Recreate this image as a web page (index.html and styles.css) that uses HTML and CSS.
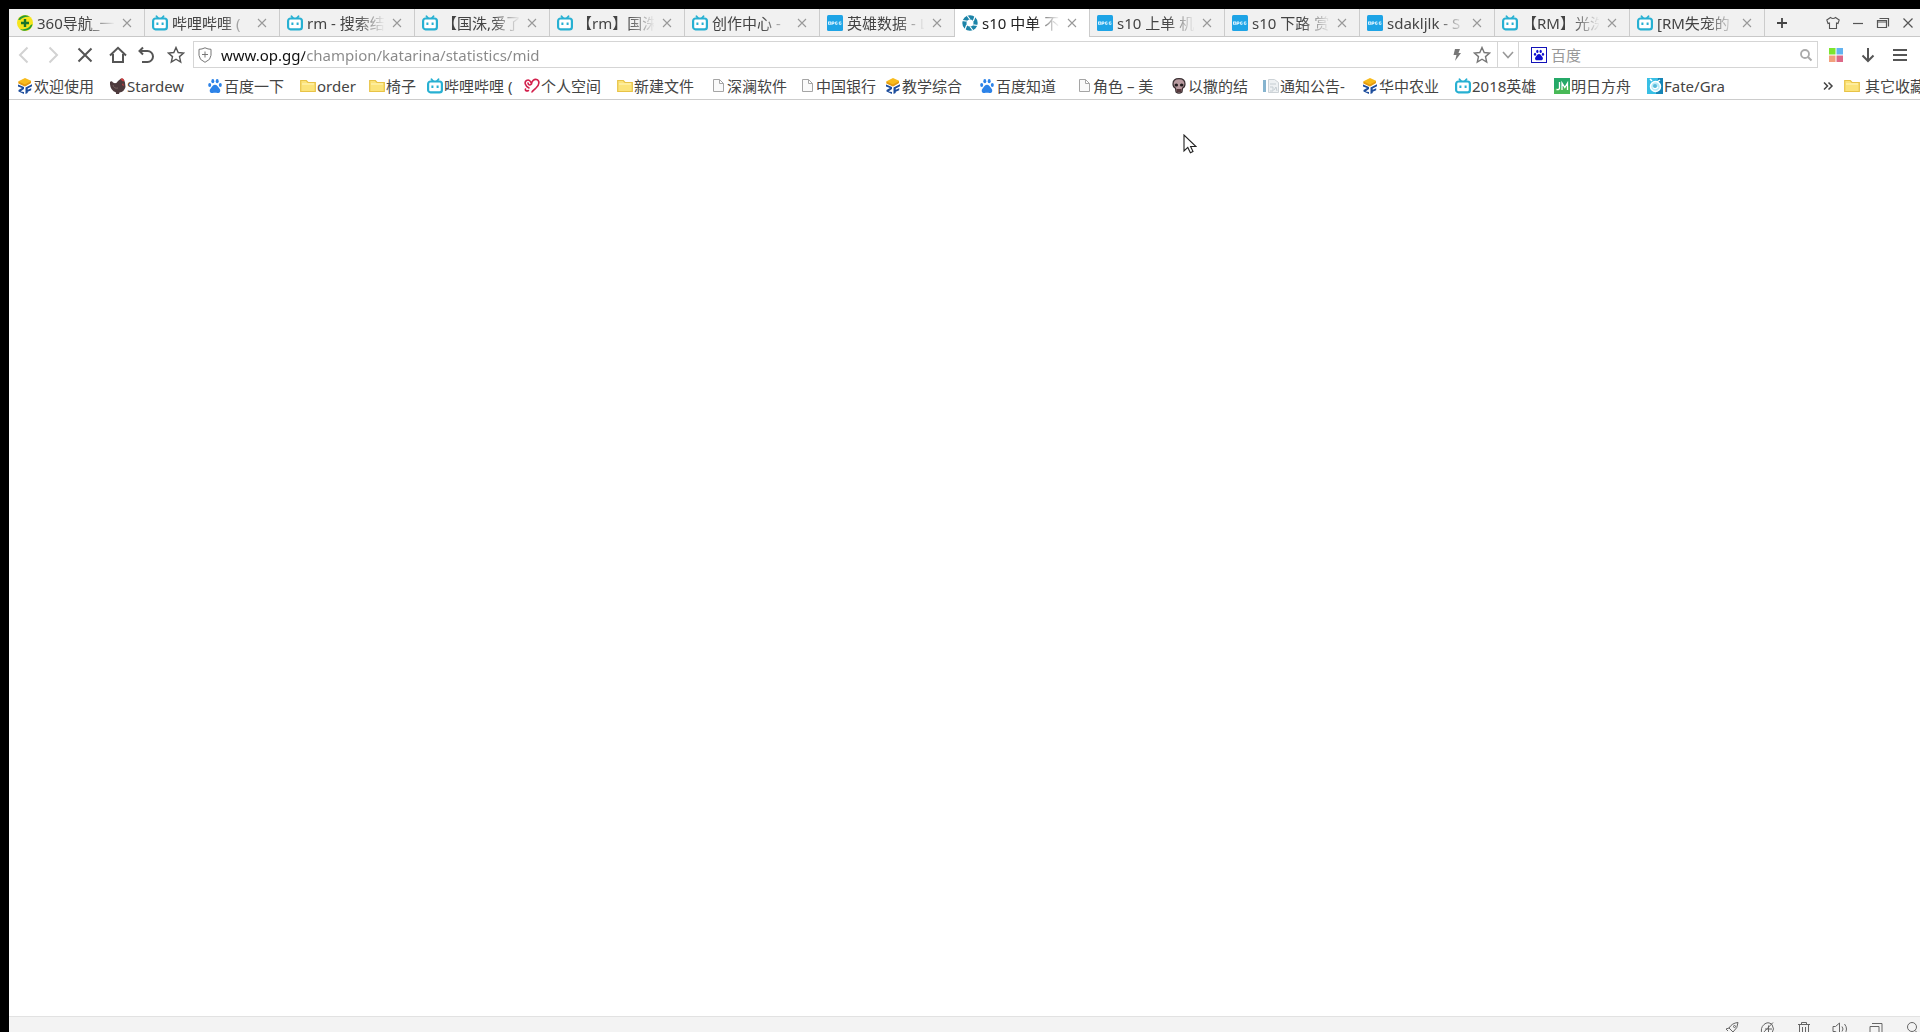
FILE: index.html
```html
<!DOCTYPE html>
<html lang="zh-CN">
<head>
<meta charset="utf-8">
<title>www.op.gg</title>
<link rel="stylesheet" href="styles.css">
</head>
<body>
<svg class="defs" aria-hidden="true">
  <symbol id="bili" viewBox="0 0 16 16"><path d="M4.500 1.200 6.200 3.400M11.500 1.200 9.800 3.400" stroke="#27b0d2" stroke-width="1.800" stroke-linecap="round"/><rect x="1.100" y="3.500" width="13.800" height="10.800" rx="2.400" fill="#fff" stroke="#27b0d2" stroke-width="2.200"/><path d="M5.400 7.500v2.400M10.600 7.500v2.400" stroke="#27b0d2" stroke-width="2"/></symbol>
  <symbol id="opgg" viewBox="0 0 16 16"><rect width="16" height="16" rx="1.500" fill="#1ea4e6"/><g fill="none" stroke="#d9f2ff" stroke-width="1"><rect x="1.500" y="7" width="2.300" height="2.200"/><path d="M5 10V7h2v1.600H5"/><path d="M10.400 7H8.600v2.300h1.600V8.300M14.300 7h-2v2.300h1.800V8.300"/></g></symbol>
  <symbol id="site" viewBox="0 0 16 16"><path d="M1.500 3.300 8 0l6 2.800v2L8 8.300 1.500 5.300z" fill="#f8bb1c"/><path d="m1.500 3.600 6.300 3L14 3.300v1.800L8 8.500 1.500 5.500z" fill="#e39a12"/><path d="M1 6.500 7 9v2l-3.500 2.500L7 14v2l-5.500-2.500V12L5 10 1 8.500zM8.500 9.500 15 6.300v2l-4.300 2.200v1.300l3.500-1.500v1.900l-3.500 1.500V15l-2.200 1z" fill="#1d4d9c"/></symbol>
  <symbol id="paw" viewBox="0 0 16 16"><g fill="currentColor"><ellipse cx="2.700" cy="7" rx="1.500" ry="2"/><ellipse cx="5.800" cy="3.200" rx="1.500" ry="2.100"/><ellipse cx="10.200" cy="3.200" rx="1.500" ry="2.100"/><ellipse cx="13.300" cy="7" rx="1.500" ry="2"/><path d="M8 6.700c2 0 2.600 1.800 4 3.200 2.500 2.500 1 5.400-1.600 5.100-1.600-.2-3.200-.2-4.800 0C3 15.300 1.500 12.400 4 9.900c1.400-1.400 2-3.200 4-3.200z"/></g></symbol>
  <symbol id="folder" viewBox="0 0 16 16"><path d="M.7 13.500V2.500h5.600l1.700 2h7.300v9z" fill="#fbe37a" stroke="#e8c347" stroke-width="1.200"/><path d="M2 6h12" stroke="#fff0a8" stroke-width="1.500"/></symbol>
  <symbol id="page" viewBox="0 0 16 16"><path d="M3.500 1.500h6l4 4v8h-10zM9.500 1.500v4h4" fill="#fafafa" stroke="#a5a5a5"/></symbol>
  <symbol id="cross" viewBox="0 0 10 10"><path d="m1 1 8 8M9 1 1 9" stroke="currentColor" stroke-width="1.100"/></symbol>
  <symbol id="star" viewBox="0 0 18 18"><path d="m9 1.500 2.200 5 5.400.5-4.100 3.600 1.200 5.400L9 13.200 4.300 16l1.200-5.400L1.400 7l5.400-.5z" fill="none" stroke="currentColor" stroke-width="1.400"/></symbol>
</svg>

<div class="browser">
  <nav class="tabs" aria-label="标签页">
    <div class="tab"><svg class="fav" viewBox="0 0 16 16"><circle cx="8" cy="8" r="8" fill="#f5e51c"/><path d="M1 4.500A8 8 0 0 1 13 2C8 1.300 5 3 3 5zM15.500 9A8 8 0 0 1 3 14.300c5 .7 9-1 10.500-4z" fill="#239b37"/><path d="M8 4v8M4 8h8" stroke="#17752a" stroke-width="2.400"/></svg><a class="title" href="#">360导航_一</a><button class="close" aria-label="关闭"><svg><use href="#cross"/></svg></button></div>
    <div class="tab"><svg class="fav"><use href="#bili"/></svg><a class="title" href="#">哔哩哔哩 (</a><button class="close" aria-label="关闭"><svg><use href="#cross"/></svg></button></div>
    <div class="tab"><svg class="fav"><use href="#bili"/></svg><a class="title" href="#">rm - 搜索结</a><button class="close" aria-label="关闭"><svg><use href="#cross"/></svg></button></div>
    <div class="tab"><svg class="fav"><use href="#bili"/></svg><a class="title" href="#">【国洙,爱了</a><button class="close" aria-label="关闭"><svg><use href="#cross"/></svg></button></div>
    <div class="tab"><svg class="fav"><use href="#bili"/></svg><a class="title" href="#">【rm】国洙</a><button class="close" aria-label="关闭"><svg><use href="#cross"/></svg></button></div>
    <div class="tab"><svg class="fav"><use href="#bili"/></svg><a class="title" href="#">创作中心 -</a><button class="close" aria-label="关闭"><svg><use href="#cross"/></svg></button></div>
    <div class="tab"><svg class="fav"><use href="#opgg"/></svg><a class="title" href="#">英雄数据 - L</a><button class="close" aria-label="关闭"><svg><use href="#cross"/></svg></button></div>
    <div class="tab active"><svg class="fav" viewBox="0 0 16 16"><circle cx="8" cy="8" r="5.600" fill="none" stroke="#1c84a8" stroke-width="4.200"/><path d="m8 4.500-3-4M11.200 6.300 13 1.500M11.200 9.800l4.800.7M8 11.500l3 4M4.800 9.700 3 14.500M4.800 6.200 0 5.500" stroke="#fff" stroke-width="1.200"/></svg><a class="title" href="#" aria-current="page">s10 中单 不</a><button class="close" aria-label="关闭"><svg><use href="#cross"/></svg></button></div>
    <div class="tab"><svg class="fav"><use href="#opgg"/></svg><a class="title" href="#">s10 上单 机</a><button class="close" aria-label="关闭"><svg><use href="#cross"/></svg></button></div>
    <div class="tab"><svg class="fav"><use href="#opgg"/></svg><a class="title" href="#">s10 下路 赏</a><button class="close" aria-label="关闭"><svg><use href="#cross"/></svg></button></div>
    <div class="tab"><svg class="fav"><use href="#opgg"/></svg><a class="title" href="#">sdakljlk - S</a><button class="close" aria-label="关闭"><svg><use href="#cross"/></svg></button></div>
    <div class="tab"><svg class="fav"><use href="#bili"/></svg><a class="title" href="#">【RM】光洙</a><button class="close" aria-label="关闭"><svg><use href="#cross"/></svg></button></div>
    <div class="tab"><svg class="fav"><use href="#bili"/></svg><a class="title" href="#">[RM失宠的</a><button class="close" aria-label="关闭"><svg><use href="#cross"/></svg></button></div>
    <button class="newtab" aria-label="新标签页"><svg viewBox="0 0 12 12"><path d="M6 1v10M1 6h10" stroke="#444" stroke-width="1.800"/></svg></button>
    <div class="window">
      <button aria-label="皮肤"><svg viewBox="0 0 14 14"><path d="M4.500 1.500q2.500 2 5 0l3.700 2.500-1.200 3.500-1.500-.5v5.500h-7V7L2 7.500.8 4z" fill="none" stroke="#555" stroke-width="1.100"/></svg></button>
      <button aria-label="最小化"><svg viewBox="0 0 14 14"><path d="M2 7.500h10" stroke="#555" stroke-width="1.200"/></svg></button>
      <button aria-label="还原"><svg viewBox="0 0 14 14"><path d="M3.500 2.500h9v8M1.500 4.500h9v7h-9zM1.500 6h9" fill="none" stroke="#555" stroke-width="1.200"/></svg></button>
      <button aria-label="关闭窗口"><svg viewBox="0 0 14 14"><path d="m2.500 2.500 9 9M11.500 2.500l-9 9" stroke="#555" stroke-width="1.200"/></svg></button>
    </div>
  </nav>

  <div class="toolbar">
    <div class="nav">
      <button class="off" aria-label="后退"><svg viewBox="0 0 18 18"><path d="M12.500 1.500 5 9l7.500 7.500"/></svg></button>
      <button class="off" aria-label="前进"><svg viewBox="0 0 18 18"><path d="M5.500 1.500 13 9l-7.500 7.500"/></svg></button>
      <button aria-label="停止"><svg viewBox="0 0 18 18"><path d="m2.500 2.500 13 13M15.500 2.500l-13 13"/></svg></button>
      <button aria-label="主页"><svg viewBox="0 0 18 18"><path d="M1 9.500 9 1.800l8 7.700M4 8v8h10V8"/></svg></button>
      <button aria-label="恢复"><svg viewBox="0 0 18 18"><path d="M6 1.500 2.500 5 6 8.500M3 5h7.500a5 5 0 0 1 0 11H5"/></svg></button>
      <button aria-label="收藏"><svg class="star"><use href="#star"/></svg></button>
    </div>
    <form class="fields">
      <svg class="shield" viewBox="0 0 16 16"><path d="M8 .8q3 1.500 6 1.500v6q0 4.500-6 7-6-2.500-6-7v-6Q5 2.300 8 .8zM8 4.500v6M5 7.500h6" fill="none" stroke="#777"/></svg>
      <input class="url" aria-label="地址" value="www.op.gg/champion/katarina/statistics/mid">
      <button type="button" class="bolt" aria-label="极速模式"><svg viewBox="0 0 12 14"><path d="M4 1h5L7.500 5H10L4 13l1.500-6H2.500z" fill="#777"/></svg></button>
      <button type="button" class="fave" aria-label="收藏此页"><svg><use href="#star"/></svg></button>
      <button type="button" class="drop" aria-label="展开"><svg viewBox="0 0 14 14"><path d="m2 4 5 5.500L12 4" fill="none" stroke="#999" stroke-width="1.600"/></svg></button>
      <svg class="engine" viewBox="0 0 16 16"><rect x=".5" y=".5" width="15" height="15" fill="#fff" stroke="#1212b8"/><g color="#1010d0"><use href="#paw" x="2" y="2" width="12" height="12"/></g></svg>
      <input class="query" aria-label="搜索" placeholder="百度">
      <button class="find" aria-label="搜索"><svg viewBox="0 0 14 14"><circle cx="6" cy="6" r="4" fill="none" stroke="#aaa" stroke-width="1.800"/><path d="m9 9 3.500 3.500" stroke="#aaa" stroke-width="2"/></svg></button>
    </form>
    <div class="extras">
      <button aria-label="扩展"><svg class="flat" viewBox="0 0 18 18"><path d="M2 2h6.500v6.500H2z" fill="#7be52e"/><path d="M9.500 2H16v6.500H9.500z" fill="#62b3f0"/><path d="M2 9.500h6.500V16H2z" fill="#f2a07c"/><path d="M9.500 9.500H16V16H9.500z" fill="#dd6888"/></svg></button>
      <button aria-label="下载"><svg viewBox="0 0 18 18"><path d="M9 2v12M3.500 9.500 9 15l5.500-5.500"/></svg></button>
      <button aria-label="菜单"><svg viewBox="0 0 18 18"><path d="M2 4h14M2 9h14M2 14h14"/></svg></button>
    </div>
  </div>

  <nav class="bookmarks" aria-label="收藏栏">
    <div class="marks">
      <a href="#"><svg><use href="#site"/></svg>欢迎使用</a>
      <a href="#"><svg viewBox="0 0 16 16"><path d="M0 4q1.500-1.500 3 .5 3 2 5-1.500L11 .5q3 0 4 4L15.500 9q-1.500 5-6 5.500L9 16H6v-1.500Q-.5 12 0 4z" fill="#4d3a3c"/><path d="M10.500 1.500 12 0l1.500 1 1 1.500-1.500 1zM13 5l1 3-2-1z" fill="#c83f41"/><path d="M3 7q1 4 5 3" fill="none" stroke="#75605e"/></svg>Stardew</a>
      <a href="#"><svg color="#2d83e8"><use href="#paw"/></svg>百度一下</a>
      <a href="#"><svg><use href="#folder"/></svg>order</a>
      <a href="#"><svg><use href="#folder"/></svg>椅子</a>
      <a href="#"><svg><use href="#bili"/></svg>哔哩哔哩 (</a>
      <a href="#"><svg viewBox="0 0 16 16"><path d="M4.500 12.500c-2 1-3.500 0-3-1.500M5 10C1 8 0 4 2.500 2.500 5 1 7 3.500 7.500 6 7.800 3 10 1 12.500 1.500 16 2.500 15.500 7 12 10c-2 2-3.500 3-4 4M4 5c.5 3 2.500 2 3.500 1" fill="none" stroke="#d3204c" stroke-width="1.600" stroke-linecap="round"/></svg>个人空间</a>
      <a href="#"><svg><use href="#folder"/></svg>新建文件</a>
      <a href="#"><svg><use href="#page"/></svg>深澜软件</a>
      <a href="#"><svg><use href="#page"/></svg>中国银行</a>
      <a href="#"><svg><use href="#site"/></svg>教学综合</a>
      <a href="#"><svg color="#2d83e8"><use href="#paw"/></svg>百度知道</a>
      <a href="#"><svg><use href="#page"/></svg>角色 – 美</a>
      <a href="#"><svg viewBox="0 0 16 16"><path d="M8 .7c4 0 6 2.300 6 5.300 0 2-1 3.500-2.500 4.200L11 14q-3 2.300-6 0l-.5-3.800C3 9.500 2 8 2 6 2 3 4 .7 8 .7z" fill="#b99ba0" stroke="#392e31" stroke-width="1.200"/><ellipse cx="5.300" cy="7" rx="1.800" ry="1.600" fill="#241e20"/><ellipse cx="10.700" cy="7" rx="1.800" ry="1.600" fill="#241e20"/><path d="M5.500 11h5v3h-5z" fill="#55383c"/></svg>以撒的结</a>
      <a href="#"><svg viewBox="0 0 16 16"><path d="M0 2h3v12H0z" fill="#86b4cf"/><path d="M5.500 1.500h6l4 3v10h-10z" fill="#eef1f3" stroke="#ccd2d6"/><path d="M7 6h6M7 9h3v4H7M11 12l2-3 1 4" fill="none" stroke="#c5cdd2"/></svg>通知公告-</a>
      <a href="#"><svg><use href="#site"/></svg>华中农业</a>
      <a href="#"><svg><use href="#bili"/></svg>2018英雄</a>
      <a href="#"><svg viewBox="0 0 16 16"><path d="M0 0h16v16H0z" fill="#25a968"/><path d="M0 11 16 8v8H0z" fill="#48b957"/><path d="M5.500 4v6q0 2-3 1.500M8 12V5l2.800 4.500L13.500 5v7" fill="none" stroke="#fff" stroke-width="1.300"/></svg>明日方舟</a>
      <a href="#"><svg viewBox="0 0 16 16"><path d="M0 0h16v16H0z" fill="#38bfe5"/><path d="M11 0h5v16H9z" fill="#1685b6"/><circle cx="8.500" cy="8.500" r="5" fill="#b7eaf7" stroke="#fff" stroke-width="1.500"/><path d="M5 3 3 1M6 9q2 3 5 0M10 4l3-2" fill="none" stroke="#fff" stroke-width="1.500"/><circle cx="8" cy="8" r="2" fill="#57b9d9"/></svg>Fate/Gra</a>
    </div>
    <button class="more" aria-label="更多收藏"><svg viewBox="0 0 12 12"><path d="m2 2.500 3.500 3.500L2 9.500M6.500 2.500 10 6 6.500 9.500" fill="none" stroke="#444" stroke-width="1.500"/></svg></button>
    <a class="other" href="#"><svg><use href="#folder"/></svg>其它收藏</a>
  </nav>

  <main class="content">
    <svg class="pointer" viewBox="0 0 14 20" aria-hidden="true"><path d="M1 1v16l3.800-3.600 2.600 5.400 2.600-1.200L7.600 12.500H13z" fill="#fff" stroke="#222" stroke-width="1.100"/></svg>
  </main>

  <footer class="status">
    <button aria-label="加速"><svg viewBox="0 0 16 16"><path d="M5 7q3-5 9-5.500Q14 7 9 11zM5 7 2 8l2 2M9 11l-1 3-2-2M4 11l-2 3 3-1.500"/><circle cx="10.500" cy="5.500" r="1"/></svg></button>
    <button aria-label="内核"><svg viewBox="0 0 16 16"><path d="M2 13Q0 7 4 3.500 8 0 12 3.500 15 8 12 12M2 13 13 1.500M5 8h7M8.500 4.500v8"/></svg></button>
    <button aria-label="清理"><svg viewBox="0 0 16 16"><path d="M2 3.500h12M5.500 3.500v-2h5v2M3.500 3.500v11h9v-11M6.500 6v6M9.500 6v6"/></svg></button>
    <button aria-label="声音"><svg viewBox="0 0 16 16"><path d="M1 5.500h2.500L7.500 2v12l-4-3.500H1zM10 5.500q2 2.500 0 5M12.500 3q4 5 0 10"/></svg></button>
    <button aria-label="窗口"><svg viewBox="0 0 16 16"><path d="M4 2.500h10v9M2 5.500h9v8H2z"/></svg></button>
    <button aria-label="缩放"><svg viewBox="0 0 16 16"><circle cx="8" cy="6" r="4.500"/><path d="m11 9.500 4 4"/></svg></button>
  </footer>
</div>
</body>
</html>
```
FILE: styles.css
```css
* { box-sizing: border-box; }

body {
  margin: 0;
  background: #000;
  color: #444;
  font: 15px/20px "Noto Sans", "Noto Sans CJK SC", sans-serif;
  overflow: hidden;
}

button {
  display: flex;
  align-items: center;
  justify-content: center;
  margin: 0;
  padding: 0;
  border: 0;
  background: none;
  color: inherit;
}

a { color: inherit; text-decoration: none; }
svg { flex: none; }
input { min-width: 0; padding: 0; border: 0; outline: 0; background: none; font: inherit; }
.defs { position: absolute; width: 0; height: 0; }

.browser {
  display: flex;
  flex-direction: column;
  min-height: 100vh;
  padding: 9px 0 0 9px;
}

/* Tab strip */
.tabs {
  display: flex;
  height: 28px;
  padding-left: 1px;
  background: #f1f1f1;
  border-bottom: 1px solid #c8c8c8;
}

.tab {
  display: flex;
  flex: 0 1 135px;
  align-items: center;
  min-width: 0;
  padding: 0 12px 0 7px;
  border-right: 1px solid #ccc;
}

.tab.active {
  height: 28px;
  background: #fff;
  color: #222;
}

.fav { width: 16px; height: 16px; margin-right: 4px; }

.title {
  flex: 1;
  min-width: 0;
  overflow: hidden;
  white-space: nowrap;
  mask-image: linear-gradient(90deg, #000 50px, transparent 78px);
}

.close { width: 10px; margin-left: 8px; color: #999; }
.close svg { width: 10px; height: 10px; }
.newtab { width: 34px; }
.newtab svg { width: 12px; height: 12px; }
.window { display: flex; margin-left: auto; }
.window button { width: 25px; }
.window svg { width: 14px; height: 14px; }

/* Address row */
.toolbar {
  display: flex;
  align-items: center;
  height: 35px;
  background: #fff;
}

.nav {
  display: grid;
  flex: none;
  grid-template-columns: 30px 28px 36px 30px 26px 34px;
}

.nav button { color: #555; }
.nav svg, .extras svg { width: 18px; height: 18px; fill: none; stroke: #555; stroke-width: 2; }
.nav .off svg { stroke: #d2d2d2; }
.extras .flat { stroke: none; }

.fields {
  display: flex;
  flex: 1;
  align-items: center;
  height: 27px;
  border: 1px solid #d5d5d5;
}

.shield { width: 16px; height: 16px; margin: 0 8px 0 3px; }

.url {
  flex: 1;
  height: 25px;
  color: transparent;
  background: linear-gradient(90deg, #111 84px, #888 84px);
  background-clip: text;
}

.bolt { width: 20px; }
.bolt svg { width: 12px; height: 14px; }
.fave { width: 30px; color: #777; }
.fave svg { width: 18px; height: 18px; }
.drop { width: 22px; height: 25px; border: solid #d5d5d5; border-width: 0 1px; }
.drop svg { width: 14px; height: 14px; }
.engine { width: 16px; height: 16px; margin: 0 4px 0 12px; }
.query { width: 244px; }
.query::placeholder { color: #999; }
.find { width: 22px; }
.find svg { width: 14px; height: 14px; }
.extras { display: flex; padding: 0 4px 0 2px; }
.extras button { width: 32px; }

/* Bookmark row */
.bookmarks {
  display: flex;
  align-items: center;
  height: 28px;
  padding-left: 8px;
  background: #fff;
  border-bottom: 1px solid #ccc;
  overflow: hidden;
}

.marks {
  display: grid;
  flex: 1;
  grid-template-columns: 93px 97px 93px 69px 58px 97px 93px 93px 89px 86px 94px 97px 95px 92px 99px 93px 99px 93px 90px;
}

.marks a, .other { display: flex; align-items: center; gap: 1px; white-space: nowrap; }
.marks svg, .other svg { width: 16px; height: 16px; }
.more { width: 12px; margin-right: 10px; }
.more svg { width: 12px; height: 12px; }
.other { flex: none; width: 76px; gap: 5px; }

/* Page area */
.content { position: relative; flex: 1; background: #fff; }
.pointer { position: absolute; top: 34px; left: 1174px; width: 14px; height: 20px; }

/* Status bar */
.status {
  display: flex;
  justify-content: flex-end;
  height: 16px;
  padding-top: 4px;
  background: #f3f3f3;
  border-top: 1px solid #e2e2e2;
  overflow: hidden;
}

.status button { flex: none; width: 36px; height: 16px; }
.status button:last-child { margin-right: -10px; }
.status svg { width: 16px; height: 16px; fill: none; stroke: #666; stroke-width: 1; }
```
